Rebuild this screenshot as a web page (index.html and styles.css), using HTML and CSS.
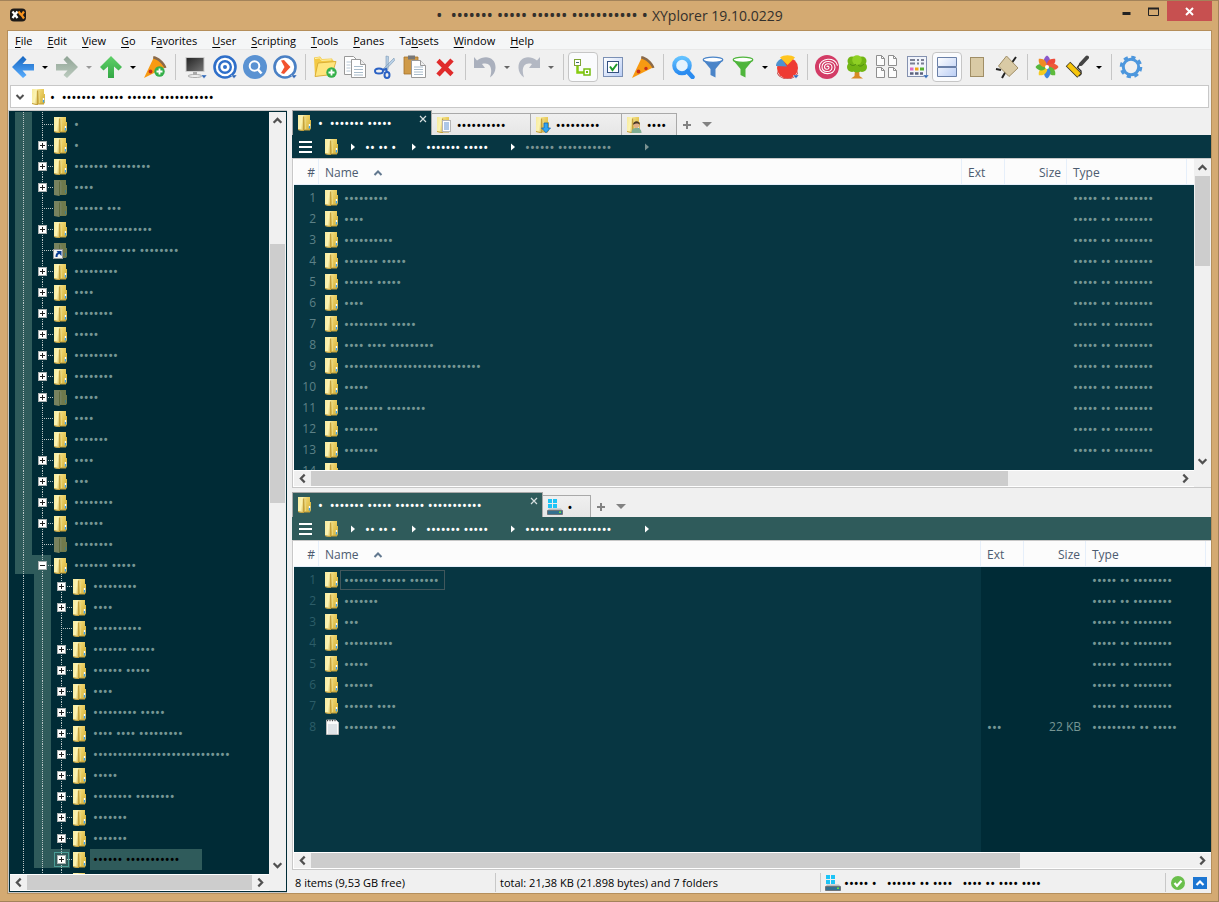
FILE: index.html
```html
<!DOCTYPE html>
<html lang="en">
<head>
<meta charset="utf-8">
<title>XYplorer 19.10.0229</title>
<link rel="stylesheet" href="styles.css">
</head>
<body>
<svg class="sprite" aria-hidden="true">
  <defs>
    <linearGradient id="gFlap" x1="0" x2="1" y1="0" y2=".4"><stop offset="0" stop-color="#f8eb9c"/><stop offset=".55" stop-color="#fbf3b4"/><stop offset="1" stop-color="#d8b84c"/></linearGradient>
    <linearGradient id="gFold" x1="0" x2="1" y1="0" y2=".8"><stop offset="0" stop-color="#fbf0a8"/><stop offset=".4" stop-color="#ecd167"/><stop offset="1" stop-color="#d6b23a"/></linearGradient>
    <linearGradient id="gBlue" x1="0" y1="0" x2="0" y2="1"><stop offset="0" stop-color="#1565c0"/><stop offset="1" stop-color="#5aaeff"/></linearGradient>
    <linearGradient id="gGrey" x1="0" y1="0" x2="0" y2="1"><stop offset="0" stop-color="#8fa394"/><stop offset="1" stop-color="#bccbbf"/></linearGradient>
    <linearGradient id="gGreen" x1="0" y1="0" x2="0" y2="1"><stop offset="0" stop-color="#5fd068"/><stop offset="1" stop-color="#33a845"/></linearGradient>
    <linearGradient id="gScreen" x1="0" y1="0" x2="1" y2="1"><stop offset="0" stop-color="#222"/><stop offset="1" stop-color="#777"/></linearGradient>
    <linearGradient id="gPane" x1="0" y1="0" x2="1" y2="1"><stop offset="0" stop-color="#fff"/><stop offset="1" stop-color="#b9cdf5"/></linearGradient>
    <linearGradient id="gLens" x1="0" y1="0" x2="0" y2="1"><stop offset="0" stop-color="#62c1ff"/><stop offset="1" stop-color="#2b8cf0"/></linearGradient>
  </defs>
  <symbol id="folder" viewBox="0 0 16 16"><path d="M5 0h8v5h1v8.500l-1 1.500H6z" fill="url(#gFold)"/><path d="M1 0h5.500l2 2v11.500L6 16l-5-1z" fill="url(#gFlap)"/><path d="M6.500 1.500v14" stroke="#c4a13c" stroke-width="1.200"/><path d="M8.500 2.500v12" stroke="#e9d57c"/><path d="M1 14.500l5 1.200 1.500-.7H13" fill="none" stroke="#c39f3a"/><path d="M12.500 9v4" stroke="#f5fbff" stroke-width="1.400"/><path d="M12.500 11v2.500" stroke="#3b9fe6" stroke-width="1.400"/></symbol>
  <symbol id="folder-dim" viewBox="0 0 16 16"><path d="M5 0h8v5h1v8.500l-1 1.500H6z" fill="#707a4c"/><path d="M1 0h5.500l2 2v11.500L6 16l-5-1z" fill="#77825f"/><path d="M6.500 1.500v14" stroke="#5d683c"/><path d="M12.500 10v3" stroke="#3f7f8b"/></symbol>
  <symbol id="folder-link" viewBox="0 0 16 16"><use href="#folder-dim"/><rect x=".5" y="6.500" width="9" height="9" fill="#f4f4f4" stroke="#999"/><path d="M3.500 14c0-2.500 1-4 3-4" fill="none" stroke="#0b3d91" stroke-width="2"/><path d="M3.500 8h5v5z" fill="#0b3d91"/></symbol>
  <symbol id="folder-doc" viewBox="0 0 16 16"><use href="#folder"/><rect x="6.500" y="3.500" width="8" height="11" fill="#fff" stroke="#b5b5b5"/><path d="M8 6h5M8 8h5M8 10h5M8 12h5" stroke="#5b8fd0"/></symbol>
  <symbol id="folder-down" viewBox="0 0 16 16"><use href="#folder"/><path d="M9 6h4v5h2.500L11 15.800 6.500 11H9z" fill="#2fa4f3" stroke="#1466ad" stroke-width=".8"/></symbol>
  <symbol id="folder-user" viewBox="0 0 16 16"><use href="#folder"/><path d="M5.500 16c0-4 2-5 4.800-5s5.200 1 5.200 5z" fill="#7fae93"/><circle cx="10.500" cy="8" r="3" fill="#e0b08a"/><path d="M7 8c0-5 7-5 7 0-1-2-5-2-7 0z" fill="#4a3728"/></symbol>
  <symbol id="drive" viewBox="0 0 16 16"><path d="M1 0h4v4H1zM6 0h4v4H6zM1 5h4v4H1zM6 5h4v4H6z" fill="#1cc4f7"/><path d="M2 9.500h12l2 2.500v3l-1 1H1l-1-1v-3z" fill="#b9bdc0"/><path d="M1 11.500h14v3.500H1z" fill="#35708f"/><path d="M12 12.500h2v1.500h-2z" fill="#6ee03c"/><path d="M.500 11.500h15v4H.500z" fill="none" stroke="#6f757a"/></symbol>
  <symbol id="textfile" viewBox="0 0 16 16"><path d="M2.500 1h9.500l2.500 2.500v12h-12z" fill="#fbfbfb" stroke="#bbb"/><path d="M4 6h9M4 8h9M4 10h9M4 12h9M4 14h9" stroke="#c3ccd3"/><path d="M3 1.500h9" stroke="#444" stroke-dasharray="1 1.500" stroke-width="1.500"/></symbol>
  <symbol id="up" viewBox="0 0 10 10"><path d="M1.500 7L5 3.500 8.500 7" fill="none" stroke="#505050" stroke-width="2"/></symbol>
  <symbol id="down" viewBox="0 0 10 10"><path d="M1.500 3L5 6.500 8.500 3" fill="none" stroke="#505050" stroke-width="2"/></symbol>
  <symbol id="left" viewBox="0 0 10 10"><path d="M7 1.500L3.500 5 7 8.500" fill="none" stroke="#505050" stroke-width="2"/></symbol>
  <symbol id="right" viewBox="0 0 10 10"><path d="M3 1.500L6.500 5 3 8.500" fill="none" stroke="#505050" stroke-width="2"/></symbol>
  <symbol id="sort" viewBox="0 0 10 10"><path d="M1.500 7L5 3.500 8.500 7" fill="none" stroke="#62788f" stroke-width="2"/></symbol>
  <symbol id="tri" viewBox="0 0 6 8"><path d="M1 .500L5 4 1 7.500z" fill="currentColor"/></symbol>
  <symbol id="burger" viewBox="0 0 14 12"><path d="M0 1h13M0 6h13M0 11h13" stroke="#fff" stroke-width="2"/></symbol>
  <symbol id="x" viewBox="0 0 8 8"><path d="M1 1l6 6M7 1L1 7" stroke="#d5dede" stroke-width="1.200"/></symbol>
  <symbol id="plus" viewBox="0 0 8 8"><path d="M4 0v8M0 4h8" stroke="#828282" stroke-width="2"/></symbol>
  <symbol id="slice" viewBox="0 0 24 24"><path d="M1 23L11 2c5 1.500 9 5 12 10z" fill="#f79a12"/><path d="M10.500 1C16 2 21 6.500 23.500 12.500l-2 .8C19 8.500 15.500 5 10 3.500z" fill="#8a6a4a"/><circle cx="7.500" cy="16.500" r="1.900" fill="#c8301c"/><circle cx="15" cy="13.500" r="1.700" fill="#c8301c"/></symbol>
  <symbol id="badge" viewBox="0 0 11 11"><circle cx="5.500" cy="5.500" r="5.200" fill="#35b04a"/><path d="M5.500 2.500v6M2.500 5.500h6" stroke="#fff" stroke-width="1.800"/></symbol>
  <symbol id="hint" viewBox="0 0 6 4"><path d="M0 0h6L3 3.500z" fill="#2f66b5" stroke="#fff" stroke-width=".4"/></symbol>
  <symbol id="page" viewBox="0 0 9 11"><path d="M.500.500h5l3 3v7h-8z" fill="#fdfdfd" stroke="#8f8f8f"/><path d="M5.500.500v3h3" fill="none" stroke="#8f8f8f"/></symbol>
</svg>

<div class="window">
  <header class="titlebar">
    <svg class="logo" viewBox="0 0 16 16"><rect width="16" height="13" y="1.500" rx="4" fill="#1d1a18"/><path d="M2.500 4.500l5 6.500M7.500 4.500l-5 6.500" stroke="#fff" stroke-width="2.300"/><path d="M8.500 4.500l2.500 3.500M14 4.500L11.500 8l2.500 3.500" fill="none" stroke="#f7931e" stroke-width="2.200"/></svg>
    <h1 class="title"><span class="bullets">•  ••••••• ••••• •••••• ••••••••••• • </span>XYplorer 19.10.0229</h1>
    <div class="controls">
      <button class="ctl" aria-label="Minimize"><svg width="11" height="11"><path d="M1.500 7.500h8" stroke="#222" stroke-width="3"/></svg></button>
      <button class="ctl" aria-label="Maximize"><svg width="11" height="11"><path d="M.500 2.500h10v7H.500z" fill="none" stroke="#222"/><path d="M0 2.500h11" stroke="#222" stroke-width="2"/></svg></button>
      <button class="ctl close" aria-label="Close"><svg width="9" height="9"><path d="M1 1l7 7M8 1L1 8" stroke="#fff" stroke-width="2"/></svg></button>
    </div>
  </header>

  <div class="client">
    <nav class="menubar">
      <button><u>F</u>ile</button><button><u>E</u>dit</button><button><u>V</u>iew</button><button><u>G</u>o</button><button>F<u>a</u>vorites</button><button><u>U</u>ser</button><button><u>S</u>cripting</button><button><u>T</u>ools</button><button><u>P</u>anes</button><button>Ta<u>b</u>sets</button><button><u>W</u>indow</button><button><u>H</u>elp</button>
    </nav>

    <div class="toolbar" role="toolbar">
      <button class="tool" aria-label="Back"><svg viewBox="0 0 24 24"><path d="M12 1l3.500 3.500-4 4.500H23v6.500H11.500l4 4.500L12 23 1 12z" fill="url(#gBlue)"/></svg></button><button class="drop" aria-label="Back list"></button>
      <button class="tool" aria-label="Forward"><svg viewBox="0 0 24 24"><path d="M12 1L8.500 4.500l4 4.500H1v6.500h11.500l-4 4.500L12 23l11-11z" fill="url(#gGrey)"/></svg></button><button class="drop dim" aria-label="Forward list"></button>
      <button class="tool" aria-label="Up"><svg viewBox="0 0 24 24"><path d="M12 1l11 11-3.500 3.500-4.500-4V23H9V11.500l-4.500 4L1 12z" fill="url(#gGreen)"/></svg></button><button class="drop" aria-label="Up list"></button>
      <button class="tool" aria-label="Add hot item"><svg viewBox="0 0 24 24"><use href="#slice"/><use href="#badge" x="11" y="11" width="11" height="11"/></svg></button>
      <i class="sep"></i>
      <button class="tool" aria-label="Computer"><svg viewBox="0 0 24 24"><rect x="3" y="2.500" width="18" height="14" fill="url(#gScreen)" stroke="#ccc"/><path d="M10 17h4v3h-4z" fill="#aaa"/><ellipse cx="12" cy="21" rx="7" ry="1.500" fill="none" stroke="#aaa"/><use href="#hint" x="18" y="20" width="6" height="4"/></svg></button>
      <button class="tool" aria-label="Target"><svg viewBox="0 0 24 24"><circle cx="12" cy="12" r="10.500" fill="#fff" stroke="#2f6fc9" stroke-width="2.600"/><circle cx="12" cy="12" r="5.800" fill="none" stroke="#2f6fc9" stroke-width="2.400"/><circle cx="12" cy="12" r="2" fill="#2f6fc9"/><use href="#hint" x="18" y="20" width="6" height="4"/></svg></button>
      <button class="tool" aria-label="Find"><svg viewBox="0 0 24 24"><circle cx="12" cy="12" r="12" fill="#5a92d2"/><circle cx="11.500" cy="11" r="4.800" fill="none" stroke="#fff" stroke-width="2"/><path d="M15 14.500l3.500 4" stroke="#fff" stroke-width="2.600"/></svg></button>
      <button class="tool" aria-label="Go"><svg viewBox="0 0 24 24"><circle cx="12" cy="12" r="10.500" fill="#fff" stroke="#4a80c4" stroke-width="2.600"/><path d="M8 5.500l3-.5 6.500 7-6.500 7-3-1L11.500 12z" fill="#f2532f"/><use href="#hint" x="18" y="20" width="6" height="4"/></svg></button>
      <i class="sep"></i>
      <button class="tool" aria-label="New folder"><svg viewBox="0 0 24 24"><path d="M1 2.500l6-1 2 2.500 10-.500 1 2 2.500 1-3 13L2 21.500z" fill="#f3c945"/><path d="M5 8l18-1.500-4 13L2 21.500z" fill="#ffe57d" stroke="#d3a52c" stroke-width=".8"/><path d="M2 3.500l4.500-.700 2 2.500 10-.500" stroke="#fff5b4" fill="none"/><use href="#badge" x="13" y="12" width="11" height="11"/></svg></button>
      <button class="tool" aria-label="Copy"><svg viewBox="0 0 24 24"><path d="M1.500 1.500h9l4 4v14h-13z" fill="#fff" stroke="#999"/><path d="M3.500 7h5M3.500 10h4M3.500 13h4M3.500 16h4" stroke="#b8c8d6"/><path d="M8.500 4.500h9l5 5v13h-14z" fill="#fff" stroke="#999"/><path d="M17.500 4.500v5h5" fill="#eee" stroke="#999"/><path d="M11 11.500h9M11 14.500h9M11 17.500h9M11 20h9" stroke="#a9bccb"/></svg></button>
      <button class="tool" aria-label="Cut"><svg viewBox="0 0 24 24"><path d="M13 1l2.500.500-.500 13-2-.5zM21 3l.5 2.500L12 15.500 10 14z" fill="#b9d0e6" stroke="#7b98b5" stroke-width=".6"/><ellipse cx="6" cy="16" rx="4" ry="2.500" fill="none" stroke="#2b62c4" stroke-width="2"/><ellipse cx="14" cy="20" rx="2.500" ry="3" fill="none" stroke="#2b62c4" stroke-width="2"/><path d="M9.500 15l3.500-1 1 3" stroke="#2b62c4" stroke-width="2" fill="none"/></svg></button>
      <button class="tool" aria-label="Paste"><svg viewBox="0 0 24 24"><path d="M1 2h14v17H1z" fill="#cf9a48" stroke="#a4712a" stroke-width=".8"/><path d="M5 .500h7v4H5z" fill="#777"/><path d="M8.500 5.500h9l5 5v12h-14z" fill="#fff" stroke="#999"/><path d="M17.500 5.500v5h5" fill="#eee" stroke="#999"/><path d="M11 12h9M11 14.500h9M11 17h9M11 19.500h9" stroke="#a9bccb"/></svg></button>
      <button class="tool" aria-label="Delete"><svg viewBox="0 0 24 24"><path d="M5 5.500l14 14M19 5L5 20" stroke="#e02b2b" stroke-width="4.600"/></svg></button>
      <i class="sep"></i>
      <button class="tool" aria-label="Undo"><svg viewBox="0 0 24 24"><path d="M1 2l3 3.500C13-1 23 3 22.500 13c-.2 4-2 7-5.500 9.500C20 14 17.500 6.500 9 9l3 4H1z" fill="#aab0bd"/></svg></button><button class="drop dark" aria-label="Undo list"></button>
      <button class="tool" aria-label="Redo"><svg viewBox="0 0 24 24"><path d="M23 2l-3 3.500C11-1 1 3 1.500 13c.2 4 2 7 5.500 9.500C4 14 6.500 6.500 15 9l-3 4h11z" fill="#b3b8c3"/></svg></button><button class="drop dark" aria-label="Redo list"></button>
      <i class="sep"></i>
      <button class="tool on" aria-label="Tree"><svg viewBox="0 0 24 24"><rect x="3.500" y="4.500" width="6" height="6" fill="#fff" stroke="#7ea536"/><path d="M5 7.500h3" stroke="#467"/><path d="M6.500 11v6.500H13" fill="none" stroke="#86cc11" stroke-width="2.500"/><rect x="13" y="14" width="6" height="6" fill="#fff" stroke="#76bd10" stroke-width="1.500"/><rect x="15" y="16" width="2" height="2" fill="#76bd10"/></svg></button>
      <button class="tool" aria-label="Check boxes"><svg viewBox="0 0 24 24"><rect x="2.500" y="2.500" width="19" height="19" fill="url(#gPane)" stroke="#7b90b5"/><rect x="6.500" y="6.500" width="11" height="11" fill="#fff" stroke="#345180"/><path d="M9 11.500l2.500 3.500 4.500-6" fill="none" stroke="#1e9a2a" stroke-width="2"/></svg></button>
      <button class="tool" aria-label="Hot items"><svg viewBox="0 0 24 24"><use href="#slice"/></svg></button>
      <i class="sep"></i>
      <button class="tool" aria-label="Search"><svg viewBox="0 0 24 24"><circle cx="11" cy="10.500" r="7.800" fill="#e4f3fd" stroke="url(#gLens)" stroke-width="4"/><path d="M16.500 16.500l5 5.500" stroke="#2b8cf0" stroke-width="4.500" stroke-linecap="round"/></svg></button>
      <button class="tool" aria-label="Visual filter"><svg viewBox="0 0 24 24"><path d="M2 5h20l-7.500 9v8.500L9.500 20v-6z" fill="#4a84c8"/><ellipse cx="12" cy="4.800" rx="9.800" ry="2.600" fill="#fff" stroke="#4a84c8" stroke-width="1.300"/></svg></button>
      <button class="tool" aria-label="Global filter"><svg viewBox="0 0 24 24"><path d="M2 5h20l-7.500 9v8.500L9.500 20v-6z" fill="#4fb53c"/><ellipse cx="12" cy="4.800" rx="9.800" ry="2.600" fill="#fff" stroke="#4fb53c" stroke-width="1.300"/></svg></button><button class="drop" aria-label="Filter list"></button>
      <button class="tool" aria-label="Statistics"><svg viewBox="0 0 24 24"><circle cx="12.500" cy="13" r="10.500" fill="#ee3b33"/><path d="M2 16c2 10 19 10 21 0v2c-3 8-18 8-21 0z" fill="#b81e1e"/><path d="M1 11C1 7 4 4.500 7 3.500l5 8z" fill="#4e92cf"/><path d="M5 2.500C9-.500 16-.500 20 2.500L12.500 10z" fill="#ffc51f"/><use href="#hint" x="18" y="20" width="6" height="4"/></svg></button>
      <i class="sep"></i>
      <button class="tool" aria-label="Spot"><svg viewBox="0 0 24 24"><circle cx="12" cy="12" r="12" fill="#d33c66"/><path d="M12 12c0-1.500 2-1 2 .5 0 2.500-4.500 2.500-4.500-.8 0-4 7.500-4 7.500.8 0 5.500-10 5.500-10-.8 0-7 13-7 13 .8 0 8.500-15.500 8-15.500-.8 0-9 16-10.500 18-1" fill="none" stroke="#fff" stroke-width="1.100"/></svg></button>
      <button class="tool" aria-label="Branch view"><svg viewBox="0 0 24 24"><path d="M10 13h4l.5 8 3.500 2.500H6L9.500 21z" fill="#d98a24"/><g fill="#72b514"><circle cx="7" cy="12" r="5"/><circle cx="17" cy="12" r="5"/><circle cx="12" cy="13" r="4.500"/><circle cx="7" cy="6" r="4.500"/><circle cx="17" cy="6" r="4.500"/></g><circle cx="12" cy="5" r="4.800" fill="#8fd024"/><path d="M5 9c2 2 4 2 6 0M13 10c2 2 4 1 6-1" stroke="#4e8b10" fill="none"/></svg></button>
      <button class="tool" aria-label="Thumbnails"><svg viewBox="0 0 24 24"><use href="#page" x="1" y="0" width="9" height="11"/><use href="#page" x="13" y="0" width="9" height="11"/><use href="#page" x="1" y="12" width="9" height="11"/><use href="#page" x="13" y="12" width="9" height="11"/></svg></button>
      <button class="tool" aria-label="Columns"><svg viewBox="0 0 24 24"><rect x="2.500" y="1.500" width="19" height="20" fill="#f1f4fb" stroke="#8592b0"/><path d="M5 5h5M5 8.500h5M12 5h2M16 5h3M12 8.500h2M16 8.500h3" stroke="#7a7f93" stroke-width="2"/><path d="M5 14h3.500" stroke="#e06bc3" stroke-width="3"/><path d="M10 14h3.500" stroke="#f0a815" stroke-width="3"/><path d="M15 14h4" stroke="#59b22e" stroke-width="3"/><path d="M5 18.500h3.500M10 18.500h3.500M15 18.500h3" stroke="#5c627d" stroke-width="2.500"/><use href="#hint" x="18" y="20" width="6" height="4"/></svg></button>
      <button class="tool on" aria-label="Dual pane"><svg viewBox="0 0 24 24"><path d="M2.500 2.500h19v9h-19zM2.500 12.500h19v9h-19z" fill="url(#gPane)" stroke="#6a80a8"/></svg></button>
      <button class="tool" aria-label="Paper"><svg viewBox="0 0 24 24"><rect x="5.500" y="2.500" width="13" height="19" fill="#d9caa5" stroke="#a08e66"/></svg></button>
      <button class="tool" aria-label="Tilt"><svg viewBox="0 0 24 24"><path d="M1 14l5 1M21 2l-5 7M7 23l4-7" stroke="#222" stroke-width="2"/><path d="M11.500 1L23 13l-9 8.500L3.500 11z" fill="#d9caa5" stroke="#a08e66"/></svg></button>
      <i class="sep"></i>
      <button class="tool" aria-label="Colors"><svg viewBox="0 0 24 24"><g transform="translate(12 12)"><path d="M0 0C-5-3-4-9 0-11.500 4-9 4-4 0 0z" fill="#8b58c9"/><path d="M0 0C-5-3-4-9 0-11.500 4-9 4-4 0 0z" fill="#ee4b3b" transform="rotate(45)"/><path d="M0 0C-5-3-4-9 0-11.500 4-9 4-4 0 0z" fill="#ee5a3a" transform="rotate(90)"/><path d="M0 0C-5-3-4-9 0-11.500 4-9 4-4 0 0z" fill="#5dbb3c" transform="rotate(135)"/><path d="M0 0C-5-3-4-9 0-11.500 4-9 4-4 0 0z" fill="#3d86e0" transform="rotate(180)"/><path d="M0 0C-5-3-4-9 0-11.500 4-9 4-4 0 0z" fill="#f5cb22" transform="rotate(225)"/><path d="M0 0C-5-3-4-9 0-11.500 4-9 4-4 0 0z" fill="#55b63d" transform="rotate(270)"/><path d="M0 0C-5-3-4-9 0-11.500 4-9 4-4 0 0z" fill="#f08a24" transform="rotate(315)"/></g><circle cx="12" cy="12" r="2" fill="#fff"/></svg></button>
      <button class="tool" aria-label="Color filters"><svg viewBox="0 0 24 24"><path d="M22 2.500L16 9" stroke="#444" stroke-width="4" stroke-linecap="round"/><path d="M15 9l-2.500 3.500L16 16v3l-2 2" fill="none" stroke="#333" stroke-width="1.400"/><path d="M3 9l11.500 11.500" stroke="#3a3420" stroke-width="6.400"/><path d="M3.500 9.500l10.500 10.500" stroke="#f7c60c" stroke-width="4.600"/></svg></button><button class="drop" aria-label="Color filter list"></button>
      <i class="sep"></i>
      <button class="tool" aria-label="Configuration"><svg viewBox="0 0 24 24"><circle cx="12" cy="12" r="9.800" fill="none" stroke="#4d97dd" stroke-width="3" stroke-dasharray="4.200 3.497"/><circle cx="12" cy="12" r="7.700" fill="none" stroke="#4d97dd" stroke-width="3"/></svg></button>
    </div>

    <div class="address">
      <button class="history" aria-label="Address history"><svg><use href="#down"/></svg></button>
      <svg class="ico"><use href="#folder"/></svg>
      <input class="path bullets" type="text" aria-label="Address" value="•  ••••••• ••••• •••••• •••••••••••">
    </div>

    <main class="body">
      <aside class="treepane">
        <div class="scrollgrid">
          <ul class="tree">
            <li class="node lit"><i class="stub"></i><svg class="ico"><use href="#folder"/></svg><span>•</span></li>
            <li class="node lit"><button class="twist" aria-label="Expand"></button><svg class="ico"><use href="#folder"/></svg><span>•</span></li>
            <li class="node lit"><button class="twist" aria-label="Expand"></button><svg class="ico"><use href="#folder"/></svg><span>••••••• ••••••••</span></li>
            <li class="node lit"><button class="twist" aria-label="Expand"></button><svg class="ico"><use href="#folder-dim"/></svg><span>••••</span></li>
            <li class="node lit"><i class="stub"></i><svg class="ico"><use href="#folder-dim"/></svg><span>•••••• •••</span></li>
            <li class="node lit"><button class="twist" aria-label="Expand"></button><svg class="ico"><use href="#folder"/></svg><span>••••••••••••••••</span></li>
            <li class="node lit"><i class="stub"></i><svg class="ico"><use href="#folder-link"/></svg><span>••••••••• ••• ••••••••</span></li>
            <li class="node lit"><button class="twist" aria-label="Expand"></button><svg class="ico"><use href="#folder"/></svg><span>•••••••••</span></li>
            <li class="node lit"><button class="twist" aria-label="Expand"></button><svg class="ico"><use href="#folder"/></svg><span>••••</span></li>
            <li class="node lit"><button class="twist" aria-label="Expand"></button><svg class="ico"><use href="#folder"/></svg><span>••••••••</span></li>
            <li class="node lit"><button class="twist" aria-label="Expand"></button><svg class="ico"><use href="#folder"/></svg><span>•••••</span></li>
            <li class="node lit"><button class="twist" aria-label="Expand"></button><svg class="ico"><use href="#folder"/></svg><span>•••••••••</span></li>
            <li class="node lit"><button class="twist" aria-label="Expand"></button><svg class="ico"><use href="#folder"/></svg><span>••••••••</span></li>
            <li class="node lit"><button class="twist" aria-label="Expand"></button><svg class="ico"><use href="#folder-dim"/></svg><span>•••••</span></li>
            <li class="node lit"><i class="stub"></i><svg class="ico"><use href="#folder"/></svg><span>••••</span></li>
            <li class="node lit"><i class="stub"></i><svg class="ico"><use href="#folder"/></svg><span>•••••••</span></li>
            <li class="node lit"><button class="twist" aria-label="Expand"></button><svg class="ico"><use href="#folder"/></svg><span>••••</span></li>
            <li class="node lit"><button class="twist" aria-label="Expand"></button><svg class="ico"><use href="#folder"/></svg><span>•••</span></li>
            <li class="node lit"><button class="twist" aria-label="Expand"></button><svg class="ico"><use href="#folder"/></svg><span>••••••••</span></li>
            <li class="node lit"><button class="twist" aria-label="Expand"></button><svg class="ico"><use href="#folder"/></svg><span>••••••</span></li>
            <li class="node lit"><i class="stub"></i><svg class="ico"><use href="#folder-dim"/></svg><span>••••••••</span></li>
            <li class="node open"><button class="twist minus" aria-label="Collapse"></button><svg class="ico"><use href="#folder"/></svg><span>••••••• •••••</span></li>
            <li class="node child"><button class="twist" aria-label="Expand"></button><svg class="ico"><use href="#folder"/></svg><span>•••••••••</span></li>
            <li class="node child"><button class="twist" aria-label="Expand"></button><svg class="ico"><use href="#folder"/></svg><span>••••</span></li>
            <li class="node child"><i class="stub"></i><svg class="ico"><use href="#folder"/></svg><span>••••••••••</span></li>
            <li class="node child"><button class="twist" aria-label="Expand"></button><svg class="ico"><use href="#folder"/></svg><span>••••••• •••••</span></li>
            <li class="node child"><button class="twist" aria-label="Expand"></button><svg class="ico"><use href="#folder"/></svg><span>•••••• •••••</span></li>
            <li class="node child"><button class="twist" aria-label="Expand"></button><svg class="ico"><use href="#folder"/></svg><span>••••</span></li>
            <li class="node child"><button class="twist" aria-label="Expand"></button><svg class="ico"><use href="#folder"/></svg><span>••••••••• •••••</span></li>
            <li class="node child"><button class="twist" aria-label="Expand"></button><svg class="ico"><use href="#folder"/></svg><span>•••• •••• •••••••••</span></li>
            <li class="node child"><button class="twist" aria-label="Expand"></button><svg class="ico"><use href="#folder"/></svg><span>••••••••••••••••••••••••••••</span></li>
            <li class="node child"><button class="twist" aria-label="Expand"></button><svg class="ico"><use href="#folder"/></svg><span>•••••</span></li>
            <li class="node child"><button class="twist" aria-label="Expand"></button><svg class="ico"><use href="#folder"/></svg><span>•••••••• ••••••••</span></li>
            <li class="node child"><button class="twist" aria-label="Expand"></button><svg class="ico"><use href="#folder"/></svg><span>•••••••</span></li>
            <li class="node child"><button class="twist" aria-label="Expand"></button><svg class="ico"><use href="#folder"/></svg><span>•••••••</span></li>
            <li class="node child current"><button class="twist" aria-label="Expand"></button><svg class="ico"><use href="#folder"/></svg><span>•••••• •••••••••••</span></li>
            <li class="node child after"><i class="stub"></i><svg class="ico"><use href="#folder"/></svg></li>
          </ul>
          <div class="vbar"><svg><use href="#up"/></svg><i class="gap tree-before"></i><i class="thumb tree-v"></i><i class="gap tree-rest"></i><svg><use href="#down"/></svg></div>
          <div class="hbar"><svg><use href="#left"/></svg><i class="thumb"></i><svg><use href="#right"/></svg></div>
          <i class="corner"></i>
        </div>
      </aside>

      <section class="right">
        <section class="pane">
          <div class="tabs" role="tablist">
            <button class="tab active" role="tab"><svg class="ico"><use href="#folder"/></svg><span class="bullets">•  ••••••• •••••</span><svg class="x"><use href="#x"/></svg></button>
            <button class="tab t2" role="tab"><svg class="ico"><use href="#folder-doc"/></svg><span class="bullets">••••••••••</span></button>
            <button class="tab t3" role="tab"><svg class="ico"><use href="#folder-down"/></svg><span class="bullets">•••••••••</span></button>
            <button class="tab t4" role="tab"><svg class="ico"><use href="#folder-user"/></svg><span class="bullets">••••</span></button>
            <button class="newtab" aria-label="New tab"><svg><use href="#plus"/></svg></button>
            <button class="tablist" aria-label="Tab list"></button>
          </div>
          <nav class="crumbs bullets">
            <button aria-label="Menu"><svg class="burger"><use href="#burger"/></svg></button>
            <svg class="ico"><use href="#folder"/></svg>
            <svg class="tri"><use href="#tri"/></svg><button class="c1">•• •• •</button>
            <svg class="tri"><use href="#tri"/></svg><button class="c2">••••••• •••••</button>
            <svg class="tri"><use href="#tri"/></svg><button class="c3 ghost">•••••• •••••••••••</button>
            <svg class="tri ghost"><use href="#tri"/></svg>
          </nav>
          <div class="scrollgrid framed">
            <div class="listbox">
              <table class="list">
                <colgroup><col class="n"><col><col class="e"><col class="s"><col class="t"><col class="m"></colgroup>
                <thead><tr><th>#</th><th>Name<svg class="sort"><use href="#sort"/></svg></th><th>Ext</th><th>Size</th><th>Type</th><th></th></tr></thead>
                <tbody>
                  <tr><td>1</td><td><svg class="ico"><use href="#folder"/></svg><span>•••••••••</span></td><td></td><td></td><td>••••• •• ••••••••</td><td></td></tr>
                  <tr><td>2</td><td><svg class="ico"><use href="#folder"/></svg><span>••••</span></td><td></td><td></td><td>••••• •• ••••••••</td><td></td></tr>
                  <tr><td>3</td><td><svg class="ico"><use href="#folder"/></svg><span>••••••••••</span></td><td></td><td></td><td>••••• •• ••••••••</td><td></td></tr>
                  <tr><td>4</td><td><svg class="ico"><use href="#folder"/></svg><span>••••••• •••••</span></td><td></td><td></td><td>••••• •• ••••••••</td><td></td></tr>
                  <tr><td>5</td><td><svg class="ico"><use href="#folder"/></svg><span>•••••• •••••</span></td><td></td><td></td><td>••••• •• ••••••••</td><td></td></tr>
                  <tr><td>6</td><td><svg class="ico"><use href="#folder"/></svg><span>••••</span></td><td></td><td></td><td>••••• •• ••••••••</td><td></td></tr>
                  <tr><td>7</td><td><svg class="ico"><use href="#folder"/></svg><span>••••••••• •••••</span></td><td></td><td></td><td>••••• •• ••••••••</td><td></td></tr>
                  <tr><td>8</td><td><svg class="ico"><use href="#folder"/></svg><span>•••• •••• •••••••••</span></td><td></td><td></td><td>••••• •• ••••••••</td><td></td></tr>
                  <tr><td>9</td><td><svg class="ico"><use href="#folder"/></svg><span>••••••••••••••••••••••••••••</span></td><td></td><td></td><td>••••• •• ••••••••</td><td></td></tr>
                  <tr><td>10</td><td><svg class="ico"><use href="#folder"/></svg><span>•••••</span></td><td></td><td></td><td>••••• •• ••••••••</td><td></td></tr>
                  <tr><td>11</td><td><svg class="ico"><use href="#folder"/></svg><span>•••••••• ••••••••</span></td><td></td><td></td><td>••••• •• ••••••••</td><td></td></tr>
                  <tr><td>12</td><td><svg class="ico"><use href="#folder"/></svg><span>•••••••</span></td><td></td><td></td><td>••••• •• ••••••••</td><td></td></tr>
                  <tr><td>13</td><td><svg class="ico"><use href="#folder"/></svg><span>•••••••</span></td><td></td><td></td><td>••••• •• ••••••••</td><td></td></tr>
                  <tr><td>14</td><td><svg class="ico"><use href="#folder"/></svg></td><td></td><td></td><td></td><td></td></tr>
                </tbody>
              </table>
            </div>
            <div class="vbar"><svg><use href="#up"/></svg><i class="thumb list-v"></i><i class="gap list-v-rest"></i><svg><use href="#down"/></svg></div>
            <div class="hbar"><svg><use href="#left"/></svg><i class="thumb list-h"></i><i class="gap list-h-rest"></i><svg><use href="#right"/></svg></div>
            <i class="corner"></i>
          </div>
        </section>

        <section class="pane focus">
          <div class="tabs" role="tablist">
            <button class="tab active" role="tab"><svg class="ico"><use href="#folder"/></svg><span class="bullets">•  ••••••• ••••• •••••• •••••••••••</span><svg class="x"><use href="#x"/></svg></button>
            <button class="tab t5" role="tab"><svg class="ico"><use href="#drive"/></svg><span class="bullets">•</span></button>
            <button class="newtab" aria-label="New tab"><svg><use href="#plus"/></svg></button>
            <button class="tablist" aria-label="Tab list"></button>
          </div>
          <nav class="crumbs bullets">
            <button aria-label="Menu"><svg class="burger"><use href="#burger"/></svg></button>
            <svg class="ico"><use href="#folder"/></svg>
            <svg class="tri"><use href="#tri"/></svg><button class="c1">•• •• •</button>
            <svg class="tri"><use href="#tri"/></svg><button class="c2">••••••• •••••</button>
            <svg class="tri"><use href="#tri"/></svg><button class="c3">•••••• •••••••••••</button>
            <svg class="tri"><use href="#tri"/></svg>
          </nav>
          <div class="scrollgrid framed">
            <div class="listbox">
              <table class="list">
                <colgroup><col class="n"><col><col class="e"><col class="s"><col class="t"><col class="m"></colgroup>
                <thead><tr><th>#</th><th>Name<svg class="sort"><use href="#sort"/></svg></th><th>Ext</th><th>Size</th><th>Type</th><th></th></tr></thead>
                <tbody>
                  <tr><td>1</td><td><svg class="ico"><use href="#folder"/></svg><span class="caret">••••••• ••••• ••••••</span></td><td></td><td></td><td>••••• •• ••••••••</td><td></td></tr>
                  <tr><td>2</td><td><svg class="ico"><use href="#folder"/></svg><span>•••••••</span></td><td></td><td></td><td>••••• •• ••••••••</td><td></td></tr>
                  <tr><td>3</td><td><svg class="ico"><use href="#folder"/></svg><span>•••</span></td><td></td><td></td><td>••••• •• ••••••••</td><td></td></tr>
                  <tr><td>4</td><td><svg class="ico"><use href="#folder"/></svg><span>••••••••••</span></td><td></td><td></td><td>••••• •• ••••••••</td><td></td></tr>
                  <tr><td>5</td><td><svg class="ico"><use href="#folder"/></svg><span>•••••</span></td><td></td><td></td><td>••••• •• ••••••••</td><td></td></tr>
                  <tr><td>6</td><td><svg class="ico"><use href="#folder"/></svg><span>••••••</span></td><td></td><td></td><td>••••• •• ••••••••</td><td></td></tr>
                  <tr><td>7</td><td><svg class="ico"><use href="#folder"/></svg><span>•••••• ••••</span></td><td></td><td></td><td>••••• •• ••••••••</td><td></td></tr>
                  <tr><td>8</td><td><svg class="ico"><use href="#textfile"/></svg><span>••••••• •••</span></td><td>•••</td><td>22 KB</td><td>••••••••• •• •••••</td><td></td></tr>
                  <tr class="filler"><td></td><td></td><td></td><td></td><td></td><td></td></tr>
                </tbody>
              </table>
            </div>
            <div class="hbar"><svg><use href="#left"/></svg><i class="thumb list2-h"></i><i class="gap list2-h-rest"></i><svg><use href="#right"/></svg></div>
          </div>
        </section>

        <footer class="status">
          <span>8 items (9,53 GB free)</span>
          <span>total: 21,38 KB (21.898 bytes) and 7 folders</span>
          <span><svg class="ico"><use href="#drive"/></svg><b class="bullets">••••• •   •••••• •• ••••   •••• •• •••• ••••</b></span>
          <span class="ends"><svg width="14" height="14" viewBox="0 0 14 14"><circle cx="7" cy="7" r="7" fill="#6abf4b"/><path d="M3.500 7l2.500 2.800 4.500-5" fill="none" stroke="#fff" stroke-width="2.200"/></svg><svg width="14" height="12" viewBox="0 0 14 12"><path d="M0 0h14v12H0z" fill="#1c76d2"/><path d="M3.500 8L7 4.500 10.500 8" fill="none" stroke="#fff" stroke-width="2.200"/></svg></span>
        </footer>
      </section>
    </main>
  </div>
</div>
</body>
</html>
```
FILE: styles.css
```css
:root {
  --deep: #002b36;
  --base: #073642;
  --accent: #2f5b5b;
  --face: #f0f0f0;
  --line: #c8c8c8;
  --text: #769694;
  --dots: #b9c4c4;
}

* { box-sizing: border-box; }

body {
  margin: 0;
  font: 11px/16px "Open Sans", "Noto Sans", sans-serif;
  color: #000;
}

button {
  margin: 0;
  padding: 0;
  border: 0;
  background: none;
  color: inherit;
  font: inherit;
}

svg { display: block; flex: none; }
.sprite { position: absolute; width: 0; height: 0; }
.ico { width: 16px; height: 16px; }

.bullets {
  font: 13px/18px "Noto Sans", "Open Sans", sans-serif;
  white-space: pre;
}

.window {
  display: flex;
  flex-direction: column;
  height: 100vh;
  padding: 0 6px 7px 7px;
  border: 1px solid #a3835a;
  border-width: 1px 1px 1px 0;
  background: #d4aa72;
}

/* Title bar */
.titlebar {
  display: grid;
  grid-template-columns: 128px 1fr 128px;
  height: 29px;
}
.logo { width: 18px; height: 16px; margin: 6px 2px; }
.title {
  margin: 0;
  text-align: center;
  font-size: 14px;
  line-height: 29px;
  font-weight: 400;
  color: #33302c;
  white-space: pre;
}
.title .bullets { font-size: 16px; line-height: 20px; }
.controls { display: flex; justify-content: flex-end; align-items: start; }
.ctl { width: 27px; height: 20px; display: grid; place-items: center; }
.ctl.close { width: 45px; background: #c75050; }

.client {
  flex: 1;
  min-height: 0;
  display: flex;
  flex-direction: column;
  border: 1px solid #b58f5c;
  background: var(--face);
}

/* Menu and toolbar */
.menubar {
  display: flex;
  height: 19px;
  background: #f5f6f7;
  border-bottom: 1px solid #e8e8e8;
}
.menubar button { padding: 0 8px 0 7px; line-height: 19px; }
.menubar u { text-underline-offset: 2px; }

.toolbar { display: flex; align-items: center; height: 34px; margin-bottom: 1px; }
.tool {
  width: 30px;
  height: 30px;
  display: grid;
  place-items: center;
  border: 1px solid transparent;
  border-radius: 4px;
}
.tool svg { width: 24px; height: 24px; }
.tool.on { border-color: #c6c6c6; background: #fafbfd; }
.drop { width: 14px; height: 24px; display: grid; place-items: center; color: #000; }
.drop::before {
  content: "";
  border: 3px solid transparent;
  border-top-color: currentColor;
  border-bottom: 0;
}
.drop.dim { color: #999; }
.drop.dark { color: #666; }
.sep { width: 10px; height: 26px; background: linear-gradient(#c6c6c6, #c6c6c6) center / 1px 100% no-repeat; }

.address {
  display: flex;
  align-items: center;
  height: 23px;
  margin: 0 2px 2px;
  border: 1px solid var(--line);
  background: #fff;
}
.history { padding: 0 4px; }
.history svg { width: 10px; height: 10px; }
.address .ico { margin-left: 2px; }
.path {
  flex: 1;
  min-width: 0;
  padding: 0 3px;
  border: 0;
  outline: 0;
  background: none;
}

/* Main split */
.body {
  flex: 1;
  min-height: 0;
  display: grid;
  grid-template-columns: 279px minmax(0, 1fr);
  column-gap: 5px;
}
.treepane {
  min-height: 0;
  display: grid;
  padding: 1px;
  border: solid var(--line);
  border-width: 1px 0 1px 1px;
  background: var(--deep);
}

.scrollgrid {
  min-height: 0;
  display: grid;
  grid-template: minmax(0, 1fr) 17px / minmax(0, 1fr) auto;
}
.vbar, .hbar { display: flex; background: var(--face); }
.vbar { grid-area: 1 / 2; flex-direction: column; width: 17px; }
.hbar { grid-area: 2 / 1; border: solid #fff; border-width: 1px 0; }
.vbar svg { width: 11px; height: 11px; margin: 3px; }
.hbar svg { width: 11px; height: 11px; margin: 2px 3px; }
.thumb { flex: 1; background: #cdcdcd; }
.vbar .thumb { margin: 0 1px; }
.gap { flex: 1; }
.corner { grid-area: 2 / 2; background: var(--face); }
.tree-before { flex-grow: 115; }
.tree-v { flex-grow: 260; }
.tree-rest { flex-grow: 354; }
.list-v { flex-grow: 89; }
.list-v-rest { flex-grow: 186; }
.list-h { flex-grow: 697; }
.list-h-rest { flex-grow: 169; }
.list2-h { flex-grow: 709; }
.list2-h-rest { flex-grow: 174; }

/* Tree */
.tree {
  --v: repeating-linear-gradient(var(--dots) 0 1px, transparent 1px 2px);
  --fill: linear-gradient(var(--accent), var(--accent));
  margin: 0;
  padding: 2px 0 0;
  overflow: hidden;
  list-style: none;
  color: var(--text);
  background:
    var(--v) 13px 0 / 1px 2px no-repeat,
    var(--v) 32px 0 / 1px 2px no-repeat,
    var(--fill) 5px 0 / 17px 2px no-repeat;
}
.node {
  display: flex;
  align-items: center;
  height: 21px;
  padding-left: 28px;
}
.node.lit {
  background:
    var(--v) 13px 0 / 1px 100% no-repeat,
    var(--v) 32px 0 / 1px 100% no-repeat,
    var(--fill) 5px 0 / 17px 100% no-repeat;
}
.node.open {
  background:
    var(--v) 13px 0 / 1px 100% no-repeat,
    var(--v) 32px 0 / 1px 100% no-repeat,
    var(--v) 51px 100% / 1px 4px no-repeat,
    var(--fill) 5px 0 / 19px 19px no-repeat,
    var(--fill) 24px 0 / 17px 100% no-repeat;
}
.node.child {
  padding-left: 47px;
  background:
    var(--v) 13px 0 / 1px 100% no-repeat,
    var(--v) 32px 0 / 1px 100% no-repeat,
    var(--v) 51px 0 / 1px 100% no-repeat,
    var(--fill) 24px 0 / 17px 100% no-repeat;
}
.node.current {
  background:
    var(--v) 13px 0 / 1px 100% no-repeat,
    var(--v) 32px 0 / 1px 100% no-repeat,
    var(--v) 51px 0 / 1px 100% no-repeat,
    var(--fill) 24px 0 / 36px 19px no-repeat;
}
.node.after {
  background:
    var(--v) 13px 0 / 1px 100% no-repeat,
    var(--v) 32px 0 / 1px 100% no-repeat,
    var(--v) 51px 0 / 1px 100% no-repeat;
}
.twist {
  width: 9px;
  height: 9px;
  margin-right: 6px;
  position: relative;
  border: 1px solid #a9b0b0;
  background:
    linear-gradient(#222, #222) center / 5px 1px no-repeat,
    linear-gradient(#222, #222) center / 1px 5px no-repeat,
    #fff;
}
.twist.minus { background: linear-gradient(#222, #222) center / 5px 1px no-repeat, #fff; }
.twist::after {
  content: "";
  position: absolute;
  left: 9px;
  top: 3px;
  width: 5px;
  height: 1px;
  background: repeating-linear-gradient(90deg, var(--dots) 0 1px, transparent 1px 2px);
}
.current .twist { outline: 1px solid #4a9c96; outline-offset: 2px; }
.stub {
  width: 11px;
  height: 1px;
  margin-left: 4px;
  background: repeating-linear-gradient(90deg, var(--dots) 0 1px, transparent 1px 2px);
}
.node span {
  margin-left: 2px;
  padding: 0 3px;
  font: 13px/21px "Noto Sans", "Open Sans", sans-serif;
  white-space: nowrap;
}
.node.current span { padding-right: 23px; background: var(--accent); color: #000; }

/* Panes */
.right { min-height: 0; display: flex; flex-direction: column; }
.pane {
  flex: 1 1 0;
  min-height: 0;
  display: flex;
  flex-direction: column;
  margin-bottom: 4px;
  --bar: var(--base);
}
.pane.focus { margin-bottom: 0; --bar: var(--accent); }

.tabs { display: flex; align-items: flex-end; height: 25px; }
.tab {
  display: flex;
  align-items: center;
  height: 22px;
  padding: 0 4px;
  border: 1px solid #a9a9a9;
  border-width: 1px 1px 0 0;
  background: linear-gradient(#f0f0f0, #e6e6e6);
}
.tab span { margin: 0 auto 0 5px; }
.tab.active {
  height: 25px;
  border-left-width: 1px;
  background: var(--bar);
  color: #fff;
}
.tab.active .x { width: 8px; height: 8px; align-self: flex-start; margin: 4px 0 0 27px; }
.focus .tab.active .x { margin-left: 48px; }
.t2 { width: 99px; }
.t3 { width: 91px; }
.t4 { width: 55px; }
.t5 { width: 48px; }
.newtab { height: 21px; padding: 0 6px; }
.newtab svg { width: 8px; height: 8px; }
.tablist { width: 20px; height: 21px; display: grid; place-items: center; color: #828282; }
.tablist::before {
  content: "";
  border: 5px solid transparent;
  border-top-color: currentColor;
  border-bottom: 0;
}

.crumbs {
  display: flex;
  align-items: center;
  height: 23px;
  padding-left: 7px;
  background: var(--bar);
  color: #fff;
}
.burger { width: 14px; height: 12px; margin-right: 11px; }
.tri { width: 6px; height: 8px; margin: 0 9px 0 10px; }
.crumbs button { text-align: left; }
.c1 { width: 36px; }
.c2 { width: 74px; }
.c3 { width: 109px; }
.ghost { color: #7b9392; }

.framed {
  flex: 1;
  border: 1px solid var(--line);
  border-width: 1px 0 1px 1px;
  padding-left: 1px;
  background: #fff;
}
.listbox { min-height: 0; overflow: hidden; background: var(--base); }
.list {
  width: 100%;
  height: 100%;
  table-layout: fixed;
  border-spacing: 0;
  font-size: 12px;
  color: var(--text);
}
.n { width: 25px; }
.e { width: 43px; }
.s { width: 62px; }
.t { width: 120px; }
.m { width: 7px; }
.focus .m { width: 5px; }
.list th {
  height: 26px;
  padding: 2px 5px 0 6px;
  border-right: 1px solid #e6effa;
  border-bottom: 1px solid #e6effa;
  background: #fcfcfc;
  color: #4c5b70;
  font-weight: 400;
  text-align: left;
}
.list th:first-child, .list td:first-child { padding-left: 0; padding-right: 3px; text-align: right; }
.list th:last-child { padding: 0; border-right: 0; }
.list th:nth-child(4) { text-align: right; }
.sort { display: inline-block; width: 10px; height: 10px; margin-left: 14px; vertical-align: -1px; }
.list td {
  height: 21px;
  padding: 0 5px 0 6px;
  line-height: 18px;
  white-space: nowrap;
}
.list td:nth-child(2) { padding-left: 5px; }
.list td:last-child { padding: 0; }
.list td:nth-child(3), .list td:nth-child(5), .list td span { font: 13px/18px "Noto Sans", "Open Sans", sans-serif; }
.list tbody tr:first-child td { height: 23px; padding-top: 2px; }
.list td:nth-child(4) { text-align: right; }
.list td:first-child { color: #5d8187; }
.list td .ico { display: inline-block; vertical-align: middle; }
.list td span { display: inline-block; margin-left: 1px; padding: 0 3px; vertical-align: middle; }
.focus .list td:first-child { color: #2c5d68; }
.focus .list td:nth-child(n + 3) { background: var(--deep); }
.focus .list .filler td { height: auto; }
.list .caret { outline: 1px solid #41575c; padding-right: 5px; }

/* Status bar */
.status {
  display: grid;
  grid-template-columns: 203fr 325fr 345fr 46px;
  height: 23px;
  padding: 3px 0 1px;
}
.status > span {
  display: flex;
  align-items: center;
  gap: 3px;
  padding: 0 4px;
  border-left: 1px solid var(--line);
  white-space: nowrap;
}
.status > span:first-child { padding-left: 3px; border: 0; }
.status b { font-weight: 400; }
.status .ends { gap: 8px; padding: 0 5px; }
```
